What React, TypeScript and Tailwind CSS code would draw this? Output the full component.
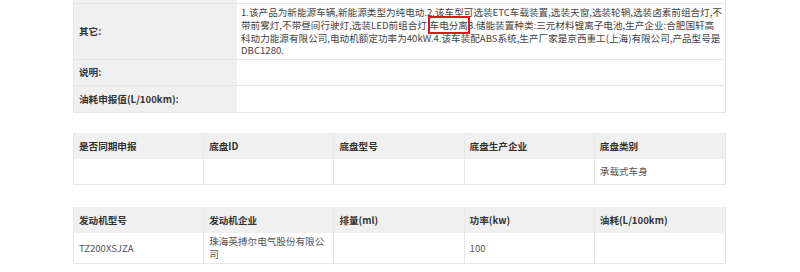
import React from 'react';

const font = { fontFamily: '"Noto Sans CJK SC", "Noto Sans", sans-serif' };

interface Row {
  label: string;
  value?: React.ReactNode;
  h: string;
}

const chassisHead = ['是否同期申报', '底盘ID', '底盘型号', '底盘生产企业', '底盘类别'];
const chassisBody = ['', '', '', '', '承载式车身'];

const engineHead = ['发动机型号', '发动机企业', '排量(ml)', '功率(kw)', '油耗(L/100km)'];
const engineBody = ['TZ200XSJZA', '珠海英搏尔电气股份有限公司', '', '100', ''];

function App() {
  const other = (
    <div>
      <div className="whitespace-nowrap">
        1.该产品为新能源车辆,新能源类型为纯电动.2.该车型可选装ETC车载装置,选装天窗,选装轮辋,选装卤素前组合灯,不
      </div>
      <div className="whitespace-nowrap">
        带前雾灯,不带昼间行驶灯,选装LED前组合灯,
        <span className="outline-2 outline-[#e3141c]">车电分离</span>
        3.储能装置种类:三元材料锂离子电池,生产企业:合肥国轩高
      </div>
      <div className="whitespace-nowrap">
        科动力能源有限公司,电动机额定功率为40kW.4.该车装配ABS系统,生产厂家是京西重工(上海)有限公司,产品型号是
      </div>
      <div className="whitespace-nowrap">DBC1280.</div>
    </div>
  );

  const rows: Row[] = [
    { label: '其它:', value: other, h: 'min-h-[56px]' },
    { label: '说明:', h: 'min-h-[26px]' },
    { label: '油耗申报值(L/100km):', h: 'min-h-[27px]' },
  ];

  return (
    <div className="w-[800px] h-[272px] overflow-hidden bg-white pl-[73px] text-[9.6px] leading-[12.8px] text-[#333]" style={font}>
      <div className="w-[653px]">
        {/* info table */}
        <div className="border-l border-r border-[#e6e6e6]">
          <div className="grid grid-cols-[163px_1fr] h-[4px] border-b border-[#e6e6e6]">
            <div className="bg-[#f0f0f0]"></div>
            <div></div>
          </div>
          {rows.map((row, i) => (
            <div key={i} className={`grid grid-cols-[163px_1fr] border-b border-[#e6e6e6] ${row.h}`}>
              <div className="bg-[#f0f0f0] flex items-center px-[5px] font-bold">{row.label}</div>
              <div className="flex items-center pl-[4px] py-[2px] text-[#444]">{row.value}</div>
            </div>
          ))}
        </div>

        {/* chassis */}
        <div className="mt-[20px] border-l border-r border-[#e6e6e6]">
          <div className="grid grid-cols-5 h-[26px] bg-[#f0f0f0]">
            {chassisHead.map((h, i) => (
              <div key={i} className="flex items-center px-[5px] font-bold border-r border-[#e9e9e9] last:border-r-0">{h}</div>
            ))}
          </div>
          <div className="grid grid-cols-5 min-h-[26px] border-b border-[#e6e6e6]">
            {chassisBody.map((v, i) => (
              <div key={i} className="flex items-center px-[5px] py-[2px] text-[#555] border-r border-[#e6e6e6] last:border-r-0">{v}</div>
            ))}
          </div>
        </div>

        {/* engine */}
        <div className="mt-[22px] border-l border-r border-[#e6e6e6]">
          <div className="grid grid-cols-5 h-[26px] bg-[#f0f0f0]">
            {engineHead.map((h, i) => (
              <div key={i} className="flex items-center px-[5px] font-bold border-r border-[#e9e9e9] last:border-r-0">{h}</div>
            ))}
          </div>
          <div className="grid grid-cols-5 min-h-[31px] border-b border-[#e6e6e6]">
            {engineBody.map((v, i) => (
              <div key={i} className="flex items-center px-[5px] py-[2px] text-[#555] border-r border-[#e6e6e6] last:border-r-0">{v}</div>
            ))}
          </div>
        </div>
      </div>
    </div>
  );
}

export default App;
